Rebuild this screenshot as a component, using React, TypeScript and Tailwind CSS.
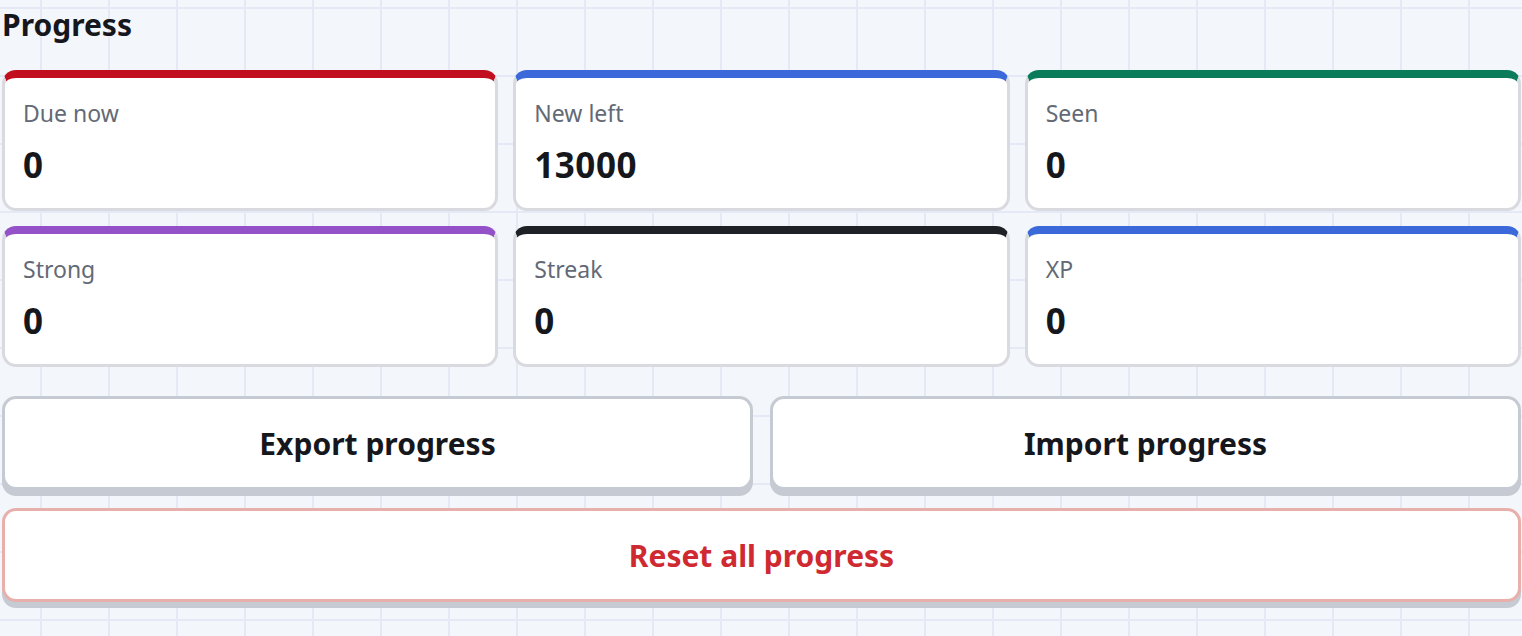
import React from 'react'

const stats = [
  { label: 'Due now', value: '0', top: 'border-t-[#c20f20]' },
  { label: 'New left', value: '13000', top: 'border-t-[#3b69d9]' },
  { label: 'Seen', value: '0', top: 'border-t-[#0a7c59]' },
  { label: 'Strong', value: '0', top: 'border-t-[#9352c7]' },
  { label: 'Streak', value: '0', top: 'border-t-[#1e2227]' },
  { label: 'XP', value: '0', top: 'border-t-[#3b69d9]' },
]

function StatCard({ label, value, top }: { label: string; value: string; top: string }) {
  return (
    <div
      className={`flex h-[141px] flex-col rounded-[14px] border-x-[3px] border-b-[3px] border-t-[8px] border-[#d9dadf] bg-white px-[18px] pt-[20px] ${top}`}
    >
      <div className="text-[23px] leading-[31px] text-[#636a76]">{label}</div>
      <div className="mt-[14px] text-[35px] font-bold leading-[44px] tracking-[0.5px] text-[#15171c]">{value}</div>
    </div>
  )
}

export default function App() {
  return (
    <div
      className="min-h-screen bg-[#f3f6fb] bg-[linear-gradient(to_right,#e5e9f5_2px,transparent_2px),linear-gradient(to_bottom,#e5e9f5_2px,transparent_2px)] bg-[size:68px_68px] bg-[position:-28px_7px] pl-[2px] pr-[1px]"
      style={{ fontFamily: '"Noto Sans", "Open Sans", sans-serif' }}
    >
      <h2 className="pt-[5px] text-[30px] font-bold leading-[40px] text-[#15171c]">Progress</h2>

      <div className="mt-[25px] grid grid-cols-3 gap-x-[15px] gap-y-[15px]">
        {stats.map((s) => (
          <StatCard key={s.label} {...s} />
        ))}
      </div>

      <div className="mt-[29px] grid grid-cols-2 gap-[17px]">
        <button className="h-[94px] rounded-[14px] border-[3px] border-[#c6cad2] bg-white text-[30px] font-bold text-[#15171c] shadow-[0_6px_0_#c6cad2]">
          Export progress
        </button>
        <button className="h-[94px] rounded-[14px] border-[3px] border-[#c6cad2] bg-white text-[30px] font-bold text-[#15171c] shadow-[0_6px_0_#c6cad2]">
          Import progress
        </button>
      </div>

      <button className="mt-[18px] h-[94px] w-full rounded-[14px] border-[3px] border-[#e7b0ab] bg-white text-[30px] font-bold text-[#cf2a31] shadow-[0_6px_0_#c6cad2]">
        Reset all progress
      </button>
    </div>
  )
}
